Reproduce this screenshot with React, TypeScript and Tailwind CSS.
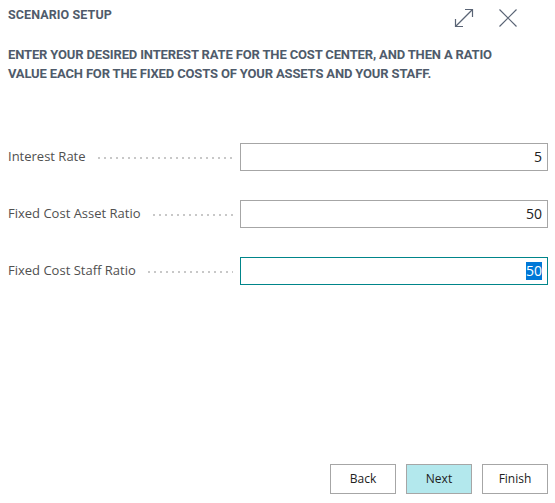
import React from "react";

const Row = ({ label, value, focused }: { label: string; value: string; focused?: boolean }) => (
  <div className="flex items-center h-[28px]">
    <div className="flex items-center w-[232px] pr-[7px]">
      <span className="text-[13px] text-[#505050] whitespace-nowrap" style={{ fontFamily: "'Open Sans', 'Noto Sans', sans-serif" }}>
        {label}
      </span>
      <span className="flex-1 ml-[10px] h-[2px] self-center mt-[2px] bg-[radial-gradient(circle,#c8c8c8_0.8px,transparent_1px)] bg-[length:6px_2px] bg-repeat-x" />
    </div>
    <div
      className={`w-[308px] h-[28px] border flex items-center justify-end pr-[5px] bg-white ${
        focused ? "border-[#00858a]" : "border-[#a6a6a6]"
      }`}
    >
      <span
        className={`text-[14px] leading-[18px] ${focused ? "bg-[#0078d7] text-white" : "text-[#212121]"}`}
        style={{ fontFamily: "'Open Sans', 'Noto Sans', sans-serif" }}
      >
        {value}
      </span>
    </div>
  </div>
);

export default function App() {
  const din = { fontFamily: "Roboto, 'Liberation Sans', sans-serif" };
  return (
    <div className="w-[555px] h-[503px] bg-white relative flex flex-col">
      <div className="flex items-start justify-between pl-[8px] pr-[37px] pt-[8px]">
        <div className="text-[12.5px] font-bold text-[#4f5b6b] tracking-[0.1px] leading-[14px]" style={din}>
          SCENARIO SETUP
        </div>
        <div className="flex items-center gap-[24px] pt-[0px]">
          <svg width="20" height="20" viewBox="0 0 20 20" fill="none" stroke="#5a6475" strokeWidth="1.2">
            <path d="M1.5 18.5 L18.5 1.5" />
            <path d="M11 1.5 H18.5 V9" />
            <path d="M1.5 11 V18.5 H9" />
          </svg>
          <svg width="20" height="20" viewBox="0 0 20 20" fill="none" stroke="#5a6475" strokeWidth="1.2">
            <path d="M1.5 1.5 L18.5 18.5 M18.5 1.5 L1.5 18.5" />
          </svg>
        </div>
      </div>
      <div
        className="mt-[17px] pl-[8px] pr-[40px] text-[13px] font-bold text-[#4f5b6b] leading-[19px] tracking-[-0.15px]"
        style={din}
      >
        ENTER YOUR DESIRED INTEREST RATE FOR THE COST CENTER, AND THEN A RATIO VALUE EACH FOR THE FIXED COSTS OF YOUR ASSETS AND YOUR STAFF.
      </div>
      <div className="mt-[60px] pl-[8px] flex flex-col gap-[29px]">
        <Row label="Interest Rate" value="5" />
        <Row label="Fixed Cost Asset Ratio" value="50" />
        <Row label="Fixed Cost Staff Ratio" value="50" focused />
      </div>
      <div className="mt-auto mb-[9px] flex justify-end gap-[10px] pr-[7px]">
        {["Back", "Next", "Finish"].map((b) => (
          <div
            key={b}
            className={`w-[66px] h-[30px] border border-[#a6a6a6] flex items-center justify-center text-[12px] text-[#212121] ${
              b === "Next" ? "bg-[#b3e8ed]" : "bg-white"
            }`}
            style={{ fontFamily: "'Open Sans', 'Noto Sans', sans-serif" }}
          >
            {b}
          </div>
        ))}
      </div>
    </div>
  );
}
